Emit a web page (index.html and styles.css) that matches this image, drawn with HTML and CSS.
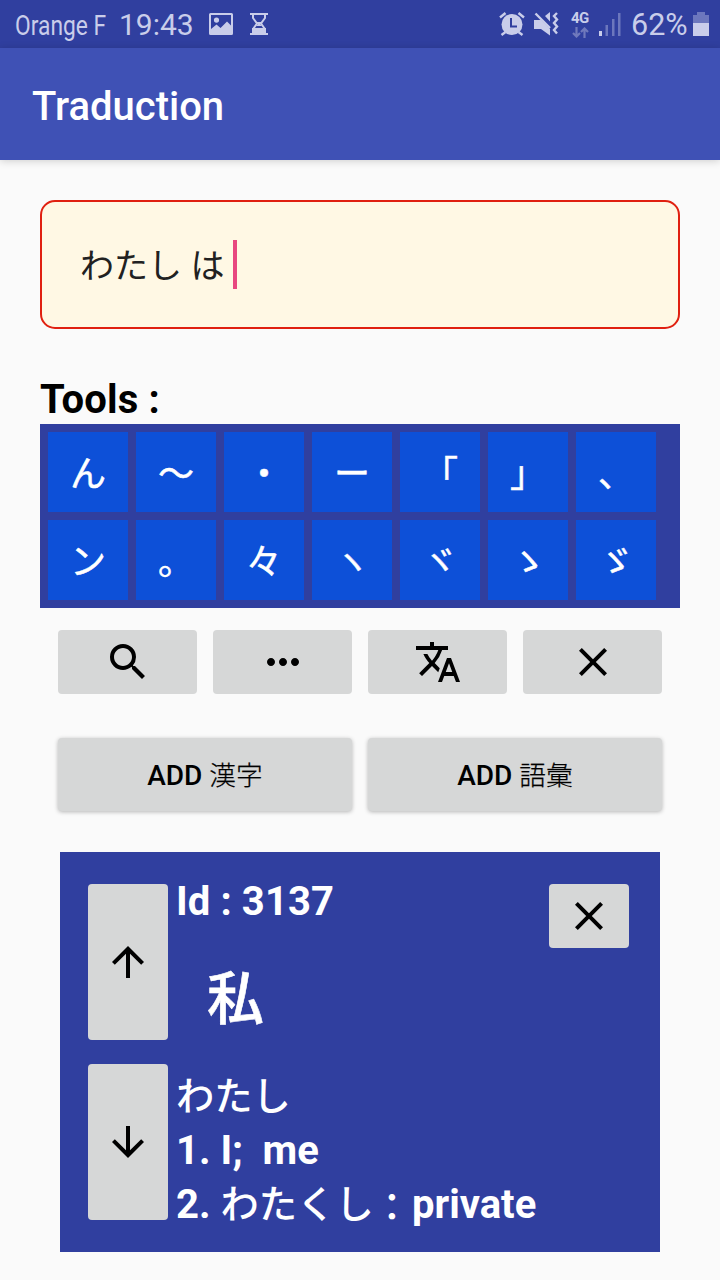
FILE: index.html
```html
<!DOCTYPE html>
<html lang="ja">
<head>
<meta charset="utf-8">
<title>Traduction</title>
<link rel="stylesheet" href="styles.css">
</head>
<body>
<header class="status">
  <span class="carrier"><span class="carrier-text">Orange F</span></span>
  <span class="clock">19:43</span>
  <svg class="st-image" width="24" height="22" viewBox="0 0 24 22"><path fill="currentColor" fill-rule="evenodd" d="M1.500 0h21A1.500 1.500 0 0 1 24 1.500v19a1.500 1.500 0 0 1-1.500 1.500h-21A1.500 1.500 0 0 1 0 20.500v-19A1.500 1.500 0 0 1 1.500 0zM2 2v14l5.500-4.500 4 3.500 6.500-6.500 4 4V2zM7.500 4.500a2.600 2.600 0 1 1 0 5.200 2.600 2.600 0 0 1 0-5.200z"/></svg>
  <svg class="st-glass" width="20" height="24" viewBox="0 0 20 24"><path fill="currentColor" d="M1 1h18v2H1zM1 21h18v2H1zM3 16h14v5.500H3z"/><path fill="none" stroke="currentColor" stroke-width="2" d="M4 2v4l4 5.500L4 17M16 2v4l-4 5.500L16 17"/><path fill="currentColor" d="M7 10h6l-2 2 2 2H7l2-2z"/></svg>
  <span class="spacer"></span>
  <svg class="st-alarm" width="26" height="24" viewBox="0 0 26 24"><circle cx="13" cy="12.500" r="10.500" fill="currentColor"/><path fill="none" stroke="currentColor" stroke-width="2.400" d="M1 5.500 6.500 1M25 5.500 19.500 1M6.500 20l-4 3M19.500 20l4 3"/><path fill="none" stroke="#303f9f" stroke-width="2" d="M12 6v8.500H18"/></svg>
  <svg class="st-mute" width="25" height="24" viewBox="0 0 25 24"><path fill="currentColor" d="M0 8h7l9 9v6.500L7 17H0zM11 4l5-4v9.500z"/><path fill="none" stroke="currentColor" stroke-width="2.400" d="M1.500 1.500 16 16M23 1l-3 3 3 3.500-3 3.500 3 3.500-3 3.500 3 3.500"/></svg>
  <span class="net"><span class="net-label">4G</span>
    <svg width="17" height="11" viewBox="0 0 17 11"><path fill="none" stroke="currentColor" stroke-width="2.200" d="M4.500 0v9M1 6l3.500 3.500L8 6M12.500 11V2M9 5l3.500-3.500L16 5"/></svg></span>
  <svg class="st-signal" width="22" height="23" viewBox="0 0 22 23"><path fill="currentColor" d="M0 18h3v5H0z"/><path fill="currentColor" opacity=".4" d="M6.500 12H9v11H6.500zM13 6h2.500v17H13zM19 0h2.500v23H19z"/></svg>
  <span class="percent">62%</span>
  <svg class="st-battery" width="16" height="24" viewBox="0 0 16 24"><path fill="currentColor" opacity=".4" d="M4 0h8v3h4v8H0V3h4z"/><path fill="currentColor" d="M0 11h16v13H0z"/></svg>
</header>
<div class="appbar"><h1 class="title">Traduction</h1></div>
<main class="content">
  <div class="entry"><span class="entry-text">わたし は </span><span class="caret"></span></div>
  <h2 class="tools-title">Tools :</h2>
  <div class="keys">
    <span class="key">ん</span><span class="key">〜</span><span class="key">・</span><span class="key">ー</span><span class="key">「</span><span class="key">」</span><span class="key">、</span>
    <span class="key">ン</span><span class="key">。</span><span class="key">々</span><span class="key">ヽ</span><span class="key">ヾ</span><span class="key">ゝ</span><span class="key">ゞ</span>
  </div>
  <div class="actions">
    <button class="btn"><svg class="icon" viewBox="0 0 24 24"><path d="M15.500 14h-.79l-.28-.27A6.471 6.471 0 0 0 16 9.500 6.500 6.500 0 1 0 9.500 16c1.610 0 3.090-.59 4.230-1.570l.27.28v.79l5 4.990L20.490 19l-4.990-5zm-6 0C7.010 14 5 11.990 5 9.500S7.010 5 9.500 5 14 7.010 14 9.500 11.990 14 9.500 14z"/></svg></button>
    <button class="btn"><svg class="icon" viewBox="0 0 24 24"><path d="M6 10c-1.100 0-2 .9-2 2s.9 2 2 2 2-.9 2-2-.9-2-2-2zm12 0c-1.100 0-2 .9-2 2s.9 2 2 2 2-.9 2-2-.9-2-2-2zm-6 0c-1.100 0-2 .9-2 2s.9 2 2 2 2-.9 2-2-.9-2-2-2z"/></svg></button>
    <button class="btn"><svg class="icon" viewBox="0 0 24 24"><path d="M12.870 15.070l-2.540-2.510.03-.03A17.520 17.520 0 0 0 14.070 6H17V4h-7V2H8v2H1v1.990h11.170C11.500 7.920 10.440 9.750 9 11.350 8.070 10.320 7.300 9.190 6.690 8h-2c.73 1.630 1.730 3.170 2.980 4.560l-5.090 5.020L4 19l5-5 3.110 3.110.76-2.040zM18.500 10h-2L12 22h2l1.120-3h4.750L21 22h2l-4.500-12zm-2.620 7l1.620-4.330L19.120 17h-3.240z"/></svg></button>
    <button class="btn"><svg class="icon" viewBox="0 0 24 24"><path d="M19 6.410 17.590 5 12 10.590 6.410 5 5 6.410 10.590 12 5 17.590 6.410 19 12 13.410 17.590 19 19 17.590 13.410 12z"/></svg></button>
  </div>
  <div class="adds">
    <button class="btn add">ADD <span class="kanji">漢字</span></button>
    <button class="btn add">ADD <span class="kanji">語彙</span></button>
  </div>
  <section class="card">
    <div class="movers">
      <button class="btn mover"><svg class="icon" viewBox="0 0 24 24"><path d="M4 12l1.410 1.410L11 7.830V20h2V7.830l5.580 5.590L20 12l-8-8-8 8z"/></svg></button>
      <button class="btn mover"><svg class="icon" viewBox="0 0 24 24"><path d="M20 12l-1.410-1.410L13 16.170V4h-2v12.170l-5.580-5.590L4 12l8 8 8-8z"/></svg></button>
    </div>
    <div class="details">
      <div class="id">Id : 3137</div>
      <div class="word">私</div>
      <div class="line"><span class="kana">わたし</span></div>
      <div class="line">1. I;&nbsp; me</div>
      <div class="line">2. <span class="kana">わたくし<span class="colon">：</span></span>private</div>
    </div>
    <button class="btn remove"><svg class="icon" viewBox="0 0 24 24"><path d="M19 6.410 17.590 5 12 10.590 6.410 5 5 6.410 10.590 12 5 17.590 6.410 19 12 13.410 17.590 19 19 17.590 13.410 12z"/></svg></button>
  </section>
</main>
</body>
</html>
```
FILE: styles.css
```css
* { box-sizing: border-box; }
body {
  margin: 0;
  width: 720px;
  height: 1280px;
  overflow: hidden;
  background: #fafafa;
  color: #000;
  font-family: Roboto, "Noto Sans CJK JP", sans-serif;
}
svg { display: block; flex: none; }

.status {
  display: flex;
  height: 48px;
  padding: 0 11px 0 15px;
  background: #303f9f;
  color: #c9cdea;
  line-height: 50px;
  white-space: nowrap;
}
.carrier { width: 104px; font-size: 27px; line-height: 52px; }
.carrier-text { display: inline-block; transform: scaleX(.845); transform-origin: 0 50%; }
.clock { width: 90px; font-size: 30px; }
.spacer { flex: 1; }
.st-image { margin-top: 13px; }
.st-glass { margin: 12px 0 0 16px; }
.st-alarm { margin: 12px 9px 0 0; }
.st-mute { margin: 12px 12px 0 0; }
.net { width: 20px; margin-right: 8px; }
.net-label { display: block; height: 27px; line-height: 37px; font-size: 15px; font-weight: 700; letter-spacing: -.5px; }
.net svg { color: #7079bc; margin-left: 1px; }
.st-signal { margin: 13px 10px 0 0; }
.percent { width: 62px; font-size: 30.5px; }
.st-battery { margin-top: 12px; }

.appbar {
  display: flex;
  align-items: center;
  height: 112px;
  padding: 5px 32px 0;
  background: #3f51b5;
  box-shadow: 0 1px 8px rgba(0, 0, 0, .18);
}
.title { margin: 0; color: #fff; font-size: 40px; font-weight: 500; }

.content { display: flex; flex-direction: column; padding: 40px 40px 0; }

.entry {
  display: flex;
  align-items: center;
  height: 129px;
  padding: 0 38px;
  border: 2px solid #e02010;
  border-radius: 15px;
  background: #fff8e4;
}
.entry-text { padding-bottom: 2px; font-size: 34px; color: #212121; white-space: pre; }
.caret { width: 4px; height: 49px; background: #e84880; }

.tools-title { margin: 46px 0 0; height: 49px; line-height: 50px; font-size: 40px; font-weight: 700; letter-spacing: .15px; }

.keys {
  display: grid;
  grid-template-columns: repeat(7, 80px);
  grid-auto-rows: 80px;
  gap: 8px;
  padding: 8px;
  background: #303f9f;
}
.key {
  background: #0d50d8;
  color: #fff;
  font-family: "Noto Sans CJK JP", sans-serif;
  font-size: 36px;
  line-height: 78px;
  text-align: center;
  -webkit-text-stroke: .5px #fff;
}

.btn {
  display: flex;
  align-items: center;
  justify-content: center;
  margin: 0;
  padding: 0;
  border: 0;
  border-radius: 4px;
  background: #d6d7d7;
  color: #000;
  font: inherit;
}
.icon { width: 48px; height: 48px; fill: #000; }

.actions { display: grid; grid-template-columns: repeat(4, 139px); gap: 16px; height: 64px; margin: 22px 18px 0; }
.adds { display: grid; grid-template-columns: repeat(2, 294px); grid-template-rows: 73px; gap: 16px; height: 72px; margin: 44px 18px 0; }
.add { padding-top: 2px; font-size: 28px; font-weight: 500; line-height: 40px; align-items: baseline; align-content: center; flex-wrap: wrap; white-space: pre; box-shadow: 0 1px 4px rgba(0, 0, 0, .28); }
.kanji { font-size: 26.7px; font-weight: 300; -webkit-text-stroke: .25px #000; }

.card {
  display: flex;
  height: 400px;
  margin: 42px 20px 0;
  padding: 32px 31px 0 28px;
  background: #303f9f;
  color: #fff;
}
.movers { display: grid; grid-template-rows: 156px 156px; gap: 24px; align-content: start; }
.mover { width: 80px; }
.details { flex: 1; padding-left: 8px; font-size: 40px; font-weight: 700; white-space: nowrap; }
.id { height: 72px; line-height: 35px; letter-spacing: .1px; }
.word { height: 114px; padding-left: 31px; font-size: 57px; line-height: 88px; }
.line { height: 54px; line-height: 54px; }
.kana, .word { font-weight: 500; }
.word { -webkit-text-stroke: .6px #fff; }
.kana { font-size: 38.3px; }
.colon { display: inline-block; line-height: 1; transform: translate(-1px, 3px); }
.remove { width: 80px; height: 64px; }
```
